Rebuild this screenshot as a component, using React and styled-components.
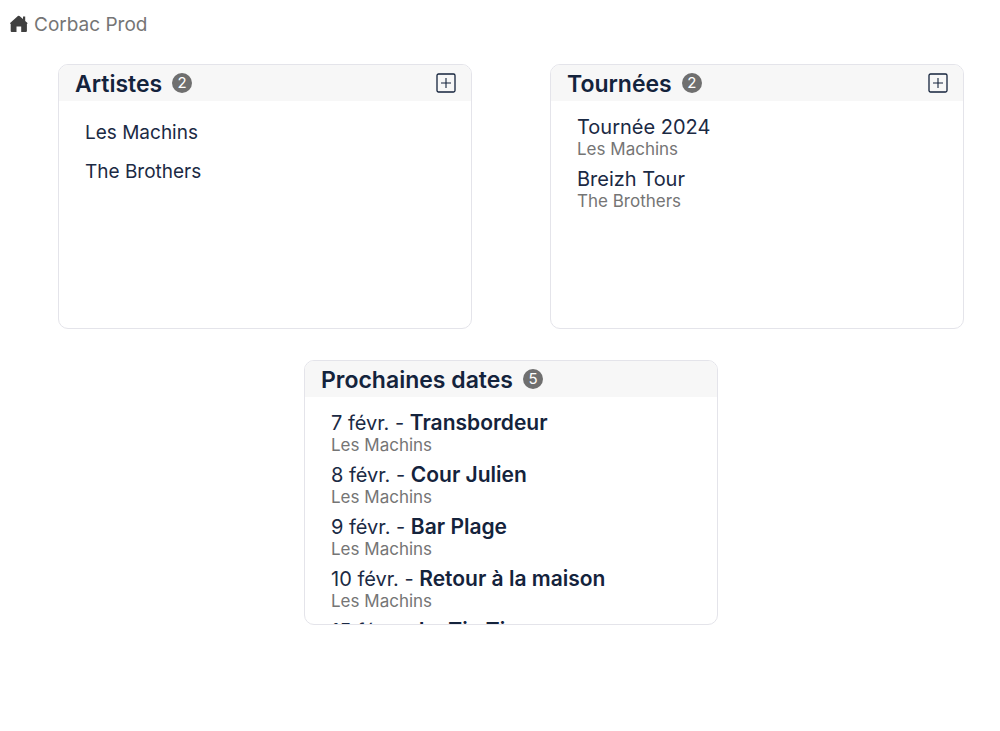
import React from 'react';
import styled, { createGlobalStyle } from 'styled-components';

const GlobalStyle = createGlobalStyle`
  * {
    box-sizing: border-box;
  }
  body {
    margin: 0;
    background: #ffffff;
    color: #1b2a44;
    font-family: Inter, "Liberation Sans", sans-serif;
    font-weight: 400;
  }
  ul, h2, p {
    margin: 0;
    padding: 0;
  }
  ul {
    list-style: none;
  }
`;

const Breadcrumb = styled.nav`
  padding: 10px 10px 0;
`;

const HomeLink = styled.a`
  display: inline-flex;
  align-items: center;
  gap: 6px;
  height: 28px;
  color: #757575;
  font-size: 19px;
  line-height: 28px;
  text-decoration: none;
`;

const HomeLabel = styled.span`
  padding-top: 2px;
`;

const Dashboard = styled.main`
  display: flex;
  flex-wrap: wrap;
  justify-content: center;
  gap: 31px 78px;
  padding: 26px 36px 32px 58px;
`;

const Card = styled.section`
  flex: 0 1 calc(50% - 39px);
  min-width: 280px;
  height: 265px;
  overflow: hidden;
  background: #ffffff;
  border: 1px solid #e4e4ea;
  border-radius: 10px;
`;

const CardHeader = styled.header`
  display: flex;
  align-items: center;
  gap: 10px;
  height: 36px;
  padding: 0 15px 0 16px;
  background: #f7f7f7;
`;

const CardTitle = styled.h2`
  padding-top: 2px;
  color: #14233c;
  font-size: 23px;
  font-weight: 600;
  line-height: 36px;
`;

const Count = styled.span`
  width: 20px;
  height: 20px;
  border-radius: 50%;
  background: #6f6f6f;
  color: #ffffff;
  font-size: 15px;
  line-height: 20px;
  text-align: center;
`;

const AddButton = styled.button`
  display: flex;
  margin-left: auto;
  padding: 0;
  border: 0;
  background: none;
  color: #14233c;
  cursor: pointer;
`;

const List = styled.ul`
  display: flex;
  flex-direction: column;
  gap: ${props => (props.$spaced ? '15px' : '8px')};
  padding: ${props => (props.$spaced ? '20px 26px' : '14px 26px')};
`;

const ItemLink = styled.a`
  display: block;
  color: inherit;
  font-size: ${props => (props.$small ? '19px' : '20px')};
  line-height: 24px;
  text-decoration: none;
`;

const Venue = styled.strong`
  color: #14233c;
  font-size: 21px;
  font-weight: 600;
`;

const Artist = styled.p`
  color: #757575;
  font-size: 17px;
  line-height: 20px;
`;

const HomeIcon = () => (
  <svg width="18" height="18" viewBox="0 0 18 18" fill="#404040" aria-hidden="true">
    <path d="M7.9 1.1a1.2 1.2 0 0 1 1.6 0L13 4.1V1.6h2.2V6L17.2 7.8c.5.5.4 1-.3 1.2V16a1 1 0 0 1-1 1H11.2v-5.6H6.5V17H1.7a1 1 0 0 1-1-1V9C0 8.8 0 8.2.4 7.8Z" />
  </svg>
);

const PlusIcon = () => (
  <svg width="20" height="20" viewBox="0 0 20 20" fill="none" stroke="currentColor" strokeWidth="1.3" aria-hidden="true">
    <rect x="1" y="1" width="18" height="18" rx="1.5" />
    <path d="M10 5v10M5 10h10" strokeWidth="1.1" />
  </svg>
);

const artists = ['Les Machins', 'The Brothers'];

const tours = [
  { name: 'Tournée 2024', artist: 'Les Machins' },
  { name: 'Breizh Tour', artist: 'The Brothers' },
];

const dates = [
  { day: '7 févr.', venue: 'Transbordeur', artist: 'Les Machins' },
  { day: '8 févr.', venue: 'Cour Julien', artist: 'Les Machins' },
  { day: '9 févr.', venue: 'Bar Plage', artist: 'Les Machins' },
  { day: '10 févr.', venue: 'Retour à la maison', artist: 'Les Machins' },
  { day: '15 févr.', venue: 'Le Tin Tin', artist: 'Les Machins' },
];

const Panel = ({ title, count, addLabel, children }) => (
  <Card>
    <CardHeader>
      <CardTitle>{title}</CardTitle>
      <Count>{count}</Count>
      {addLabel && (
        <AddButton type="button" aria-label={addLabel}>
          <PlusIcon />
        </AddButton>
      )}
    </CardHeader>
    {children}
  </Card>
);

const App = () => {
  return (
    <>
      <GlobalStyle />
      <Breadcrumb>
        <HomeLink href="#">
          <HomeIcon />
          <HomeLabel>Corbac Prod</HomeLabel>
        </HomeLink>
      </Breadcrumb>
      <Dashboard>
        <Panel title="Artistes" count={artists.length} addLabel="Ajouter un artiste">
          <List $spaced>
            {artists.map(name => (
              <li key={name}>
                <ItemLink $small href="#">{name}</ItemLink>
              </li>
            ))}
          </List>
        </Panel>
        <Panel title="Tournées" count={tours.length} addLabel="Ajouter une tournée">
          <List>
            {tours.map(tour => (
              <li key={tour.name}>
                <ItemLink href="#">{tour.name}</ItemLink>
                <Artist>{tour.artist}</Artist>
              </li>
            ))}
          </List>
        </Panel>
        <Panel title="Prochaines dates" count={dates.length}>
          <List>
            {dates.map(date => (
              <li key={date.day}>
                <ItemLink href="#">
                  {date.day} - <Venue>{date.venue}</Venue>
                </ItemLink>
                <Artist>{date.artist}</Artist>
              </li>
            ))}
          </List>
        </Panel>
      </Dashboard>
    </>
  );
};

export default App;
